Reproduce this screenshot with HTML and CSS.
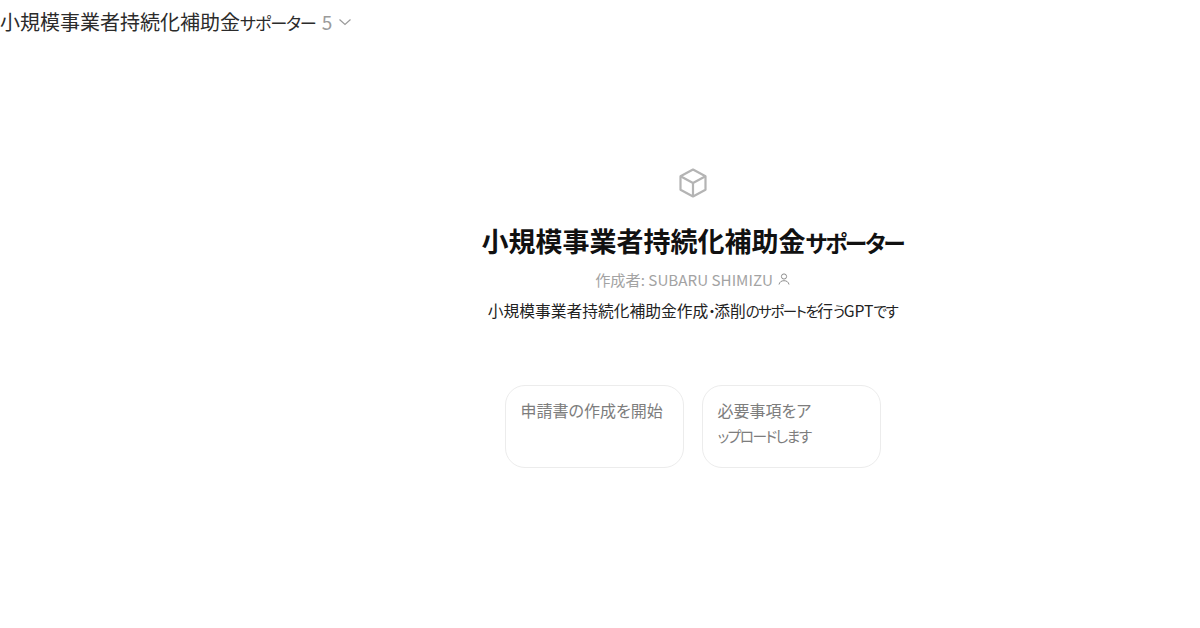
FILE: index.html
```html
<!DOCTYPE html>
<html lang="ja">
<head>
    <meta charset="UTF-8">
    <meta name="viewport" content="width=device-width, initial-scale=1.0">
    <title>小規模事業者持続化補助金サポーター</title>
    <link rel="stylesheet" href="styles.css">
</head>
<body>
    <header class="topbar">
        <span class="topbar-title">小規模事業者持続化補助金<span class="kana">サポーター</span></span>
        <span class="topbar-version">5</span>
        <svg class="chevron" width="14" height="8" viewBox="0 0 14 8" fill="none" stroke="#9b9b9b" stroke-width="1.2">
            <path d="M1.500 1.500L7 6.500l5.500-5"/>
        </svg>
    </header>

    <main class="intro">
        <svg class="cube" width="30" height="32" viewBox="0 0 30 32" fill="none" stroke="#b4b4b4" stroke-width="2.2" stroke-linejoin="round">
            <path d="M15 2.500l12.500 6.800v13.400L15 29.500 2.500 22.700V9.300z"/>
            <path d="M3 9.500L15 16l12-6.500M15 16v13"/>
        </svg>
        <h1>小規模事業者持続化補助金<span class="kana">サポーター</span></h1>
        <p class="author">
            作成者: SUBARU SHIMIZU
            <svg class="person" width="12" height="12" viewBox="0 0 12 12" fill="none" stroke="#8e8e8e" stroke-width="1">
                <circle cx="6" cy="3.500" r="2.600"/>
                <path d="M1 11.500c.6-2.600 2.400-3.800 5-3.800s4.400 1.200 5 3.800"/>
            </svg>
        </p>
        <p class="description">小規模事業者持続化補助金作成<span class="kana">・</span>添削<span class="kana">のサポートを</span>行<span class="kana">う</span>GPT<span class="kana">です</span></p>

        <div class="starters">
            <div class="starter">申請書の作成を開始</div>
            <div class="starter">必要事項をア<br><span class="kana">ップロードします</span></div>
        </div>
    </main>
</body>
</html>
```

FILE: styles.css
```css
body {
    font-family: "Noto Sans CJK JP", "Noto Sans", sans-serif;
    font-feature-settings: "palt";
    background-color: #fff;
    margin: 0;
    height: 628px;
    overflow: hidden;
}

.kana {
    font-size: 0.92em;
    letter-spacing: -0.1em;
}

.topbar {
    display: flex;
    align-items: center;
    height: 42px;
    color: #2b2b2b;
    font-size: 20px;
}

.topbar .kana {
    font-size: 0.86em;
    letter-spacing: -0.07em;
}

.topbar-version {
    color: #9b9b9b;
    font-size: 19px;
    margin-left: 6px;
}

.chevron {
    margin-left: 6px;
    margin-top: 2px;
}

.intro {
    display: flex;
    flex-direction: column;
    align-items: center;
    padding-left: 185px;
    padding-top: 125px;
}

.cube {
    display: block;
}

h1 {
    font-size: 27px;
    font-weight: 700;
    color: #111;
    line-height: 36px;
    margin: 24px 0 0;
}

h1 .kana {
    font-size: 0.84em;
    letter-spacing: -0.09em;
}

.author {
    display: flex;
    align-items: center;
    gap: 5px;
    font-size: 15.200px;
    line-height: 24px;
    color: #a3a3a3;
    margin: 6px 0 0;
}

.description {
    font-size: 15.750px;
    line-height: 24px;
    color: #222;
    margin: 8px 0 0;
}

.starters {
    display: flex;
    gap: 18px;
    margin-top: 62px;
}

.starter {
    width: 179px;
    height: 83px;
    box-sizing: border-box;
    padding: 12px 15px;
    border: 1px solid #ececec;
    border-radius: 20px;
    font-size: 16px;
    line-height: 25px;
    color: #7d7d7d;
}
```
